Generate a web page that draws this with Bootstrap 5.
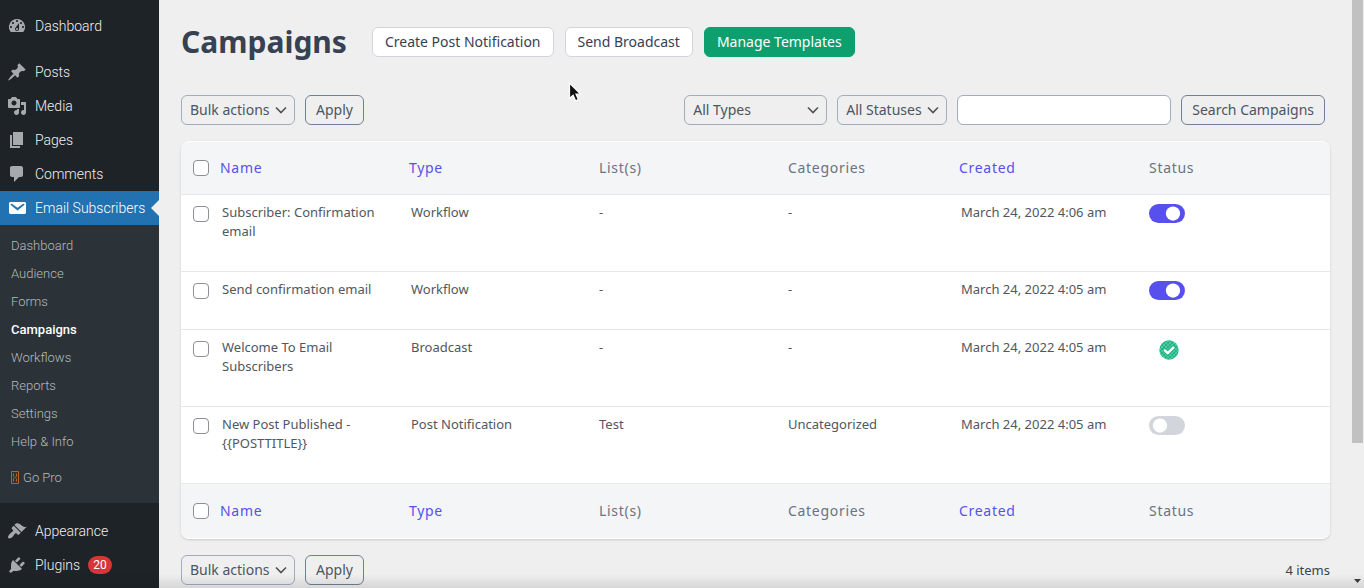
<!DOCTYPE html>
<html lang="en">
<head>
<meta charset="utf-8">
<meta name="viewport" content="width=device-width, initial-scale=1">
<title>Campaigns</title>
<link href="https://cdn.jsdelivr.net/npm/bootstrap@5.3.0/dist/css/bootstrap.min.css" rel="stylesheet">
<style>
body{background:#efefef;font-family:"Noto Sans",sans-serif;font-size:14px;line-height:20px;color:#3c434a}
.shell{height:100vh}
/* Sidebar */
.side{width:159px;background:#1d2327;font-family:Roboto,sans-serif;padding-top:9px}
.side a{text-decoration:none}
.side-link{height:34px;padding-left:7px;gap:8px;color:#f0f0f1;font-size:14px;font-weight:300;white-space:nowrap}
.side-link svg{width:20px;height:20px;fill:#a7aaad;flex:none}
.side-link.current{background:#2271b1;color:#fff}
.side-link.current svg{fill:#fff}
.side-link.current::after{content:"";position:absolute;right:0;top:9px;border:8px solid transparent;border-right-color:#efefef;border-left:0}
.gap-top{margin-top:12px}
.side-sub{background:#2c3338;padding:7px 0 11px;margin-bottom:11px}
.side-sub a{display:block;padding:4px 11px;color:#b4b9be;font-size:13px;font-weight:300;line-height:20px}
.side-sub a.on{color:#fff;font-weight:500}
.side-sub .pro{margin-top:8px}
.count{background:#d63638;color:#fff;border-radius:9px;font-size:12px;line-height:18px;padding:0 5px;min-width:22px;text-align:center;font-weight:400}
/* Content */
.main{padding:21px 22px 0 22px;min-width:0}
h1{font-size:30px;font-weight:700;line-height:42px;color:#374151;margin:0 25px 0 0}
.actions{gap:11px}
.row-tools{gap:10px}
.btn{font-size:14px;line-height:20px;padding:4px 12px;border-radius:6px}
.btn-plain{background:#fff;border-color:#d1d5db;color:#374151}
.btn-go{background:#0e9f6e;border-color:#0e9f6e;color:#fff}
.btn-line{padding:4px 10px;border-color:#718096;color:#4b5563}
.form-select,.form-control{font-size:14px;line-height:20px;height:30px;padding:4px 8px;border-color:#a0aec0;border-radius:6px;color:#4b5563}
.form-select{background-color:transparent;background-image:url("data:image/svg+xml,%3Csvg xmlns='http://www.w3.org/2000/svg' viewBox='0 0 16 16'%3E%3Cpath d='M3 5.500l5 5 5-5' fill='none' stroke='%23555' stroke-width='1.700'/%3E%3C/svg%3E");background-size:16px;background-position:right 5px center}
.w-bulk{width:114px}.w-types{width:143px}.w-status{width:110px}.w-find{width:214px}
.tools{margin-top:32px;padding-right:5px}
.sheet{margin-top:16px;border-radius:8px;background:#fff;border-top:1px solid #fff;border-bottom:1px solid #fff;box-shadow:0 1px 3px rgba(0,0,0,.1),0 1px 2px rgba(0,0,0,.06);overflow:hidden}
.grid-table{table-layout:fixed;width:100%;color:#50575e;font-size:13px;line-height:19px}
.grid-table th{font-size:14px;font-weight:400;letter-spacing:.05em;line-height:20px;color:#6b7280;background:#f4f5f7;padding:16px 8px;height:52px}
.grid-table th a{color:#5850ec;text-decoration:none}
.grid-table td{padding:8px 8px 30px;vertical-align:top;border-top:1px solid #e5e7eb}
.grid-table tfoot th{border-top:1px solid #e5e7eb;height:54px}
.grid-table .lead-in{padding-left:10px}
.c-box{width:31px}.c-std{width:189px}.c-wide{width:190px}.c-short{width:171px}
.grid-table .pick{padding-left:12px;padding-right:0}
.pick .form-check-input{display:block;width:16px;height:16px;margin:0;border:1px solid #8c8f94;border-radius:4px}
td.pick .form-check-input{margin-top:3px}
.form-switch{padding:0;min-height:0;margin:0 0 -1px}
.form-switch .form-check-input{display:block;float:none;width:36px;height:19px;margin:1px 0 0;border:0;background-color:#d2d6dc;background-size:19px 19px;background-position:left 1px center;background-image:url("data:image/svg+xml,%3Csvg xmlns='http://www.w3.org/2000/svg' viewBox='0 0 20 20'%3E%3Ccircle cx='10.500' cy='10' r='7.500' fill='%23fff'/%3E%3C/svg%3E")}
.form-switch .form-check-input:checked{background-color:#5850ec;background-position:right 3px center}
.sent{margin:2px 0 -3px 10px;display:block}
.foot{margin-top:16px}
.count-text{font-size:13px;color:#3c434a}
/* Scroll track, edge shade and pointer */
.track{width:12px}
.thumb{height:75.300%;background:#c1c1c1;margin-right:1px}
.shade{position:fixed;left:0;right:0;bottom:0;height:14px;background:linear-gradient(transparent,rgba(0,0,0,.1));pointer-events:none}
.pointer{position:fixed;left:568px;top:82px;pointer-events:none}
</style>
</head>
<body>
<div class="shell d-flex overflow-hidden">
<nav class="side flex-shrink-0" aria-label="Admin">
<a href="#" class="side-link d-flex align-items-center"><svg viewBox="0 0 20 20"><path fill-rule="evenodd" d="M3.76 16h12.48A7.998 7.998 0 0 0 10 3a7.998 7.998 0 0 0-6.24 13zM10 4c.55 0 1 .45 1 1s-.45 1-1 1-1-.45-1-1 .45-1 1-1zM6 6c.55 0 1 .45 1 1s-.45 1-1 1-1-.45-1-1 .45-1 1-1zm8 0c.55 0 1 .45 1 1s-.45 1-1 1-1-.45-1-1 .45-1 1-1zm-5.37 5.55L12 7v6c0 1.100-.9 2-2 2s-2-.9-2-2c0-.57.24-1.080.63-1.450zM4 10c.55 0 1 .45 1 1s-.45 1-1 1-1-.45-1-1 .45-1 1-1zm12 0c.55 0 1 .45 1 1s-.45 1-1 1-1-.45-1-1 .45-1 1-1zm-5 3c0-.55-.45-1-1-1s-1 .45-1 1 .45 1 1 1 1-.45 1-1z"/></svg>Dashboard</a>
<a href="#" class="side-link gap-top d-flex align-items-center"><svg viewBox="0 0 20 20"><path d="M10.440 3.020l1.820-1.820 6.360 6.350-1.830 1.820c-1.050-.68-2.480-.57-3.410.36l-.75.75c-.92.93-1.040 2.350-.35 3.410l-1.830 1.820-2.410-2.410-2.800 2.790c-.42.42-3.380 2.710-3.800 2.290s1.860-3.390 2.280-3.810l2.790-2.790L4.100 9.360l1.830-1.820c1.050.69 2.480.57 3.400-.36l.75-.75c.93-.92 1.050-2.350.36-3.410z"/></svg>Posts</a>
<a href="#" class="side-link d-flex align-items-center"><svg viewBox="0 0 20 20"><path fill-rule="evenodd" d="M13 11V4c0-.55-.45-1-1-1h-1.670L9 1H5L3.670 3H2c-.55 0-1 .45-1 1v7c0 .55.45 1 1 1h10c.55 0 1-.45 1-1zM7 4.500c1.380 0 2.500 1.120 2.500 2.500S8.380 9.500 7 9.500 4.500 8.380 4.500 7 5.620 4.500 7 4.500zM14 6h5v10.500c0 1.380-1.120 2.500-2.500 2.500S14 17.880 14 16.500s1.120-2.500 2.500-2.500c.17 0 .34.02.5.05V9h-3V6zm-4 8.050V13h2v3.500c0 1.380-1.120 2.500-2.500 2.500S7 17.880 7 16.500 8.120 14 9.500 14c.17 0 .34.02.5.05z"/></svg>Media</a>
<a href="#" class="side-link d-flex align-items-center"><svg viewBox="0 0 20 20"><path d="M6 15V2h10v13H6zm-1 1h8v2H3V5h2v11z"/></svg>Pages</a>
<a href="#" class="side-link d-flex align-items-center"><svg viewBox="0 0 20 20"><path d="M5 2h9c1.100 0 2 .9 2 2v7c0 1.100-.9 2-2 2h-2l-5 5v-5H5c-1.100 0-2-.9-2-2V4c0-1.100.9-2 2-2z"/></svg>Comments</a>
<a href="#" class="side-link current position-relative d-flex align-items-center"><svg viewBox="0 0 20 20"><path fill-rule="evenodd" d="M3.870 4h13.250C18.370 4 19 4.590 19 5.790v8.420c0 1.190-.63 1.790-1.880 1.790H3.870c-1.250 0-1.880-.6-1.880-1.790V5.790c0-1.200.63-1.790 1.880-1.790zm6.620 8.600l6.740-5.530c.24-.2.43-.66.13-1.070-.29-.41-.82-.42-1.170-.17l-5.700 3.860L4.800 5.830c-.35-.25-.88-.24-1.170.17-.3.41-.11.87.13 1.070z"/></svg>Email Subscribers</a>
<div class="side-sub">
<a href="#">Dashboard</a><a href="#">Audience</a><a href="#">Forms</a><a href="#" class="on">Campaigns</a><a href="#">Workflows</a><a href="#">Reports</a><a href="#">Settings</a><a href="#">Help &amp; Info</a>
<a href="#" class="pro d-flex align-items-center"><svg class="me-1" width="8" height="16" viewBox="0 0 8 16" fill="none" stroke="#b8622b"><path d="M.5 1.500h7v12h-7zM2.500 3.500v3M5.500 3.500v3l-3 2v3M5.500 8.500v3"/></svg>Go Pro</a>
</div>
<a href="#" class="side-link d-flex align-items-center"><svg viewBox="0 0 20 20"><path d="M14.480 11.060L7.410 3.990l1.500-1.500c.5-.56 2.300-.47 3.510.32 1.210.8 1.430 1.280 2.910 2.100 1.180.64 2.450 1.260 4.450.85zm-.71.71L6.700 4.700 4.930 6.470c-.39.39-.39 1.020 0 1.410l1.060 1.060c.39.39.39 1.030 0 1.420-.6.6-1.430 1.110-2.210 1.690-.35.26-.7.53-1.010.84C1.430 14.230.4 16.080 1.400 17.070c.99 1 2.840-.03 4.180-1.360.31-.31.58-.66.85-1.020.57-.78 1.080-1.610 1.690-2.210.39-.39 1.020-.39 1.410 0l1.060 1.060c.39.39 1.020.39 1.410 0z"/></svg>Appearance</a>
<a href="#" class="side-link d-flex align-items-center"><svg viewBox="0 0 20 20"><path d="M13.110 4.360L9.870 7.600 8 5.730l3.240-3.240c.35-.34 1.050-.2 1.560.32.52.51.66 1.210.31 1.550zm-8 1.770l.91-1.120 9.010 9.010-1.190.84c-.71.71-2.630 1.160-3.820 1.160H6.140L4.900 17.260c-.59.59-1.540.59-2.120 0-.59-.58-.59-1.530 0-2.120l1.240-1.240v-3.880c0-1.130.4-3.190 1.090-3.890zm7.260 3.970l3.240-3.240c.34-.35 1.040-.21 1.550.31.52.51.66 1.210.31 1.550l-3.240 3.250z"/></svg><span class="d-flex align-items-center">Plugins <span class="count ms-2">20</span></span></a>
</nav>

<main class="main flex-grow-1">
<header class="d-flex align-items-center">
<h1>Campaigns</h1>
<div class="actions d-flex"><button type="button" class="btn btn-plain">Create Post Notification</button><button type="button" class="btn btn-plain">Send Broadcast</button><button type="button" class="btn btn-go">Manage Templates</button></div>
</header>
<form class="tools row-tools d-flex">
<select class="form-select w-bulk" aria-label="Bulk actions"><option>Bulk actions</option></select>
<button type="button" class="btn btn-line me-auto">Apply</button>
<select class="form-select w-types" aria-label="Type"><option>All Types</option></select>
<select class="form-select w-status" aria-label="Status"><option>All Statuses</option></select>
<input type="search" class="form-control w-find" aria-label="Search campaigns">
<button type="button" class="btn btn-line">Search Campaigns</button>
</form>
<div class="sheet">
<table class="grid-table">
<colgroup><col class="c-box"><col class="c-std"><col class="c-wide"><col class="c-std"><col class="c-short"><col class="c-wide"><col></colgroup>
<thead><tr><th class="pick"><input type="checkbox" class="form-check-input" aria-label="Select all"></th><th><a href="#">Name</a></th><th><a href="#">Type</a></th><th>List(s)</th><th>Categories</th><th><a href="#">Created</a></th><th>Status</th></tr></thead>
<tbody>
<tr><td class="pick"><input type="checkbox" class="form-check-input" aria-label="Select Subscriber: Confirmation email"></td><td class="lead-in">Subscriber: Confirmation email</td><td class="lead-in">Workflow</td><td>-</td><td>-</td><td class="lead-in">March 24, 2022 4:06 am</td><td><div class="form-check form-switch"><input type="checkbox" role="switch" class="form-check-input" checked aria-label="Active"></div></td></tr>
<tr><td class="pick"><input type="checkbox" class="form-check-input" aria-label="Select Send confirmation email"></td><td class="lead-in">Send confirmation email</td><td class="lead-in">Workflow</td><td>-</td><td>-</td><td class="lead-in">March 24, 2022 4:05 am</td><td><div class="form-check form-switch"><input type="checkbox" role="switch" class="form-check-input" checked aria-label="Active"></div></td></tr>
<tr><td class="pick"><input type="checkbox" class="form-check-input" aria-label="Select Welcome To Email Subscribers"></td><td class="lead-in">Welcome To Email Subscribers</td><td class="lead-in">Broadcast</td><td>-</td><td>-</td><td class="lead-in">March 24, 2022 4:05 am</td><td><svg class="sent" width="20" height="20" viewBox="0 0 20 20" role="img" aria-label="Sent"><defs><pattern id="dots" width="4" height="4" patternUnits="userSpaceOnUse"><circle cx="1" cy="1" r=".7" fill="#a9ead2"/><circle cx="3" cy="3" r=".7" fill="#a9ead2"/></pattern></defs><circle cx="10" cy="10" r="9.700" fill="#1fb584"/><circle cx="10" cy="10" r="9.700" fill="url(#dots)"/><path d="M5.800 10.300l2.900 2.900 5.600-5.600" fill="none" stroke="#1fb584" stroke-width="4.500" stroke-linecap="round" stroke-linejoin="round"/><path d="M5.800 10.300l2.900 2.900 5.600-5.600" fill="none" stroke="#fff" stroke-width="2.400" stroke-linecap="round" stroke-linejoin="round"/></svg></td></tr>
<tr><td class="pick"><input type="checkbox" class="form-check-input" aria-label="Select New Post Published"></td><td class="lead-in">New Post Published - {{POSTTITLE}}</td><td class="lead-in">Post Notification</td><td>Test</td><td>Uncategorized</td><td class="lead-in">March 24, 2022 4:05 am</td><td><div class="form-check form-switch"><input type="checkbox" role="switch" class="form-check-input" aria-label="Active"></div></td></tr>
</tbody>
<tfoot><tr><th class="pick"><input type="checkbox" class="form-check-input" aria-label="Select all"></th><th><a href="#">Name</a></th><th><a href="#">Type</a></th><th>List(s)</th><th>Categories</th><th><a href="#">Created</a></th><th>Status</th></tr></tfoot>
</table>
</div>
<div class="foot row-tools d-flex align-items-center">
<select class="form-select w-bulk" aria-label="Bulk actions"><option>Bulk actions</option></select>
<button type="button" class="btn btn-line me-auto">Apply</button>
<span class="count-text">4 items</span>
</div>
</main>
<div class="track d-flex flex-column justify-content-between flex-shrink-0" aria-hidden="true"><div class="thumb"></div><svg class="mb-1" width="11" height="6" viewBox="0 0 11 6"><path d="M2 1h7L5.500 5z" fill="#404040"/></svg></div>
</div>
<div class="shade"></div>
<svg class="pointer" width="14" height="21" viewBox="0 0 14 21" aria-hidden="true"><path d="M1.500 1v15.500l3.600-3.300 2.500 5.600 2.800-1.200-2.400-5.400h4.800z" fill="#111" stroke="#fff" stroke-width="1.200"/></svg>
<script src="https://cdn.jsdelivr.net/npm/bootstrap@5.3.0/dist/js/bootstrap.bundle.min.js"></script>
</body>
</html>
